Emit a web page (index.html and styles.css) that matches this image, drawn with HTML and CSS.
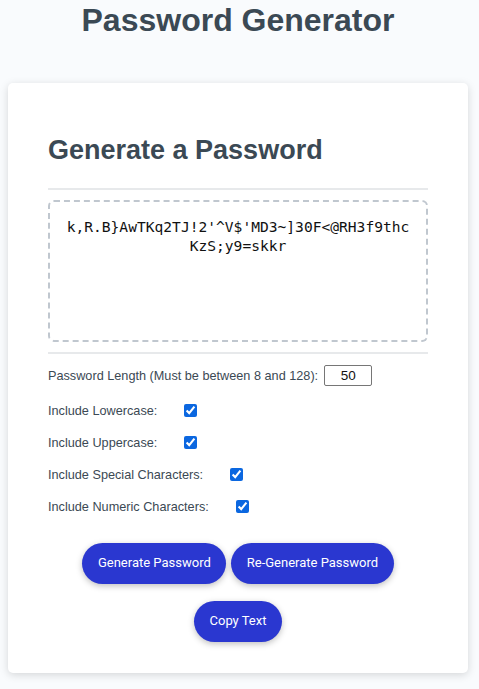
FILE: index.html
```html
<!DOCTYPE html>
<html lang="en">
<head>
<meta charset="UTF-8">
<title>Password Generator</title>
<link rel="stylesheet" href="styles.css">
</head>
<body>
  <div class="wrapper">
    <header class="header">
      <h1 class="title">Password Generator</h1>
    </header>
    <main class="card">
      <div class="card-header">
        <h2 class="card-title">Generate a Password</h2>
      </div>
      <div class="card-body">
        <textarea class="password" readonly aria-label="Generated Password">k,R.B}AwTKq2TJ!2'^V$'MD3~]30F&lt;@RH3f9thc
KzS;y9=skkr</textarea>
      </div>
      <div class="card-footer">
        <div class="options">
          <div class="option option-length">
            <label class="option-label" for="length">Password Length (Must be between 8 and 128):</label>
            <input class="length-input" id="length" type="text" value="50">
          </div>
          <div class="option">
            <label class="option-label" for="lower">Include Lowercase:</label>
            <input class="check" id="lower" type="checkbox" checked>
          </div>
          <div class="option">
            <label class="option-label" for="upper">Include Uppercase:</label>
            <input class="check" id="upper" type="checkbox" checked>
          </div>
          <div class="option">
            <label class="option-label" for="special">Include Special Characters:</label>
            <input class="check" id="special" type="checkbox" checked>
          </div>
          <div class="option">
            <label class="option-label" for="numeric">Include Numeric Characters:</label>
            <input class="check" id="numeric" type="checkbox" checked>
          </div>
        </div>
        <div class="actions">
          <button class="btn" type="button">Generate Password</button>
          <button class="btn" type="button">Re-Generate Password</button>
          <button class="btn" type="button">Copy Text</button>
        </div>
      </div>
    </main>
  </div>
</body>
</html>
```

FILE: styles.css
```css
* {
  box-sizing: border-box;
}

html,
body {
  margin: 0;
  padding: 0;
}

body {
  background-color: #f9fbfd;
  font-family: "Liberation Sans", Arial, sans-serif;
  color: #3b4954;
}

.wrapper {
  padding: 2px 11px 16px 8px;
}

.header {
  text-align: center;
}

.title {
  margin: 0;
  font-size: 32px;
  font-weight: bold;
  line-height: 1.15;
  color: #3b4954;
}

.card {
  display: block;
  margin-top: 44px;
  background-color: #ffffff;
  border-radius: 5px;
  box-shadow: 0 2px 8px rgba(0, 0, 0, 0.15);
  font-size: 18px;
  padding: 30px 40px 31px;
}

.card-title {
  margin: 22px 0 22px;
  font-size: 27px;
  font-weight: bold;
  line-height: 31px;
}

.card-header::after,
.card-footer::before {
  content: "";
  display: block;
  height: 2px;
  background: #e7e9eb;
}

.password {
  display: block;
  width: 100%;
  height: 142px;
  margin: 10px 0;
  padding: 15px 15px 85px;
  border: 2px dashed #c0c7cf;
  border-radius: 6px;
  font-family: "DejaVu Sans Mono", "Liberation Mono", monospace;
  font-size: 14.6px;
  line-height: 19px;
  text-align: center;
  color: #111111;
  background: #ffffff;
  resize: none;
  overflow: hidden;
  outline: none;
}

.options {
  display: flex;
  flex-direction: column;
  padding-top: 6px;
  font-size: 12.7px;
  color: #3b4954;
}

.option {
  display: flex;
  align-items: center;
  height: 32px;
}

.option-length {
  margin-bottom: 3px;
}

.option-label {
  line-height: 16px;
}

.length-input {
  width: 48px;
  height: 21px;
  margin: 0 0 0 6px;
  padding: 0 4px;
  border: 1px solid #767676;
  border-radius: 2px;
  font-family: "Liberation Sans", Arial, sans-serif;
  font-size: 13.5px;
  text-align: center;
  color: #111111;
}

.check {
  width: 13px;
  height: 13px;
  margin: 0 0 0 27px;
  accent-color: #0b67e0;
}

.actions {
  display: flex;
  flex-wrap: wrap;
  justify-content: center;
  gap: 17px 5px;
  padding-top: 20px;
}

.btn {
  border: none;
  background-color: #2a37d0;
  border-radius: 25px;
  box-shadow: 0 2px 6px rgba(0, 0, 0, 0.25);
  color: #ffffff;
  font-family: Roboto, "Liberation Sans", Arial, sans-serif;
  font-size: 13px;
  line-height: 16px;
  padding: 12.5px 15.5px;
  cursor: pointer;
}
```
